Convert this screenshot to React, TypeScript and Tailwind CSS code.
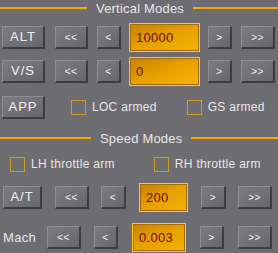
import React from 'react';

const FONT = '"Liberation Sans", Arial, sans-serif';

function Btn({ label, className = '', small = false }: { label: string; className?: string; small?: boolean }) {
  return (
    <div
      className={`flex h-[23px] shrink-0 items-center justify-center border-t border-l border-t-[#8e8d92] border-l-[#8e8d92] border-b-2 border-r-2 border-b-[#3c3b40] border-r-[#3c3b40] bg-gradient-to-br from-[#7c7b80] to-[#67666b] text-[#f4f4f4] ${
        small ? 'text-[10px] tracking-[0.5px]' : 'text-[13px] font-light tracking-[1px]'
      } ${className}`}
    >
      {label}
    </div>
  );
}

function Field({ value, className = '' }: { value: string; className?: string }) {
  return (
    <div className={`flex h-[29px] shrink-0 items-center border border-[#ffd000] bg-[#ffd000] ${className}`}>
      <div className="flex h-full w-full items-center border border-[#a86a00] bg-gradient-to-br from-[#c98400] via-[#e8a000] to-[#f4b400] pl-[5px] text-[13px] tracking-[0.3px] text-[#6a0c00]">
        {value}
      </div>
    </div>
  );
}

function Check({ label, className = '' }: { label: string; className?: string }) {
  return (
    <div className={`flex items-center ${className}`}>
      <div className="h-[15px] w-[15px] border border-[#d49a20]" />
      <span className="ml-[6px] text-[12px] tracking-[0.3px]">{label}</span>
    </div>
  );
}

function Header({ title, left }: { title: string; left: string }) {
  return (
    <div className="flex h-[16px] items-center">
      <div className={`h-[2px] bg-[#f0aa00] ${left}`} />
      <span className="px-[9px] text-[13px] leading-none tracking-[0.2px]">{title}</span>
      <div className="h-[2px] flex-1 bg-[#f0aa00]" />
    </div>
  );
}

export default function App() {
  return (
    <div
      className="flex h-[253px] w-[278px] flex-col overflow-hidden bg-[#6d6c71] text-[#e8e8e8]"
      style={{ fontFamily: FONT }}
    >
      <Header title="Vertical Modes" left="w-[87px]" />

      <div className="mt-[7px] flex items-center">
        <Btn label="ALT" className="ml-[2px] w-[43px]" />
        <Btn label="<<" small className="ml-[10px] w-[33px]" />
        <Btn label="<" small className="ml-[9px] w-[24px]" />
        <Field value="10000" className="ml-[8px] w-[71px]" />
        <Btn label=">" small className="ml-[8px] w-[24px]" />
        <Btn label=">>" small className="ml-[9px] w-[34px]" />
      </div>

      <div className="mt-[5px] flex items-center">
        <Btn label="V/S" className="ml-[2px] w-[43px]" />
        <Btn label="<<" small className="ml-[10px] w-[33px]" />
        <Btn label="<" small className="ml-[9px] w-[24px]" />
        <Field value="0" className="ml-[8px] w-[71px]" />
        <Btn label=">" small className="ml-[8px] w-[24px]" />
        <Btn label=">>" small className="ml-[9px] w-[34px]" />
      </div>

      <div className="mt-[9px] flex h-[24px] items-center">
        <Btn label="APP" className="ml-[2px] w-[43px]" />
        <Check label="LOC armed" className="ml-[26px]" />
        <Check label="GS armed" className="ml-[30px]" />
      </div>

      <div className="mt-[11px]">
        <Header title="Speed Modes" left="w-[91px]" />
      </div>

      <div className="mt-[9px] flex items-center">
        <Check label="LH throttle arm" className="ml-[10px]" />
        <Check label="RH throttle arm" className="ml-[39px]" />
      </div>

      <div className="mt-[10px] flex items-center">
        <Btn label="A/T" className="ml-[3px] w-[39px]" />
        <Btn label="<<" small className="ml-[13px] w-[34px]" />
        <Btn label="<" small className="ml-[12px] w-[25px]" />
        <Field value="200" className="ml-[13px] w-[49px]" />
        <Btn label=">" small className="ml-[13px] w-[25px]" />
        <Btn label=">>" small className="ml-[12px] w-[34px]" />
      </div>

      <div className="mt-[11px] flex items-center">
        <span className="ml-[3px] w-[34px] text-[13px] tracking-[0.3px]">Mach</span>
        <Btn label="<<" small className="ml-[10px] w-[34px]" />
        <Btn label="<" small className="ml-[13px] w-[24px]" />
        <Field value="0.003" className="ml-[14px] w-[54px]" />
        <Btn label=">" small className="ml-[14px] w-[24px]" />
        <Btn label=">>" small className="ml-[14px] w-[34px]" />
      </div>
    </div>
  );
}
